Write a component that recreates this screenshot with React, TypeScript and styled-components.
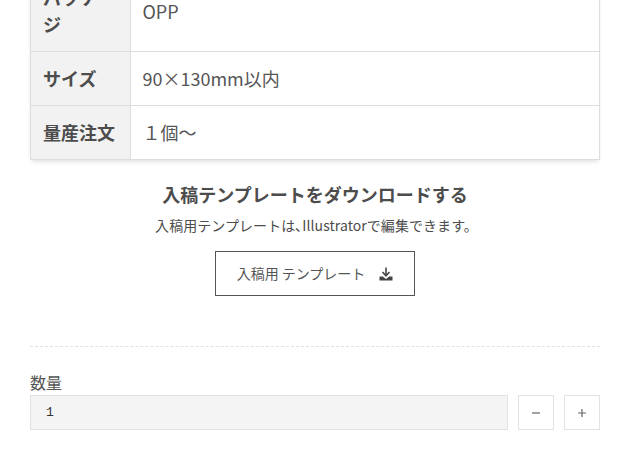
import React from 'react';
import styled, { createGlobalStyle } from 'styled-components';

const GlobalStyle = createGlobalStyle`
  html, body {
    margin: 0;
    padding: 0;
    height: 100%;
    overflow: hidden;
    background: #fff;
  }
  body {
    font-family: "Noto Sans CJK JP", "Noto Sans", sans-serif;
    color: #4c4c4c;
  }
`;

const specs = [
  { label: 'パッケージ', value: 'OPP' },
  { label: 'サイズ', value: '90×130mm以内' },
  { label: '量産注文', value: '１個～' },
];

const App: React.FC = () => (
  <>
    <GlobalStyle />
    <Page>
      <SpecTable>
        <tbody>
          {specs.map((spec) => (
            <tr key={spec.label}>
              <SpecLabel>{spec.label}</SpecLabel>
              <SpecValue>{spec.value}</SpecValue>
            </tr>
          ))}
        </tbody>
      </SpecTable>

      <Download>
        <DownloadTitle>入稿テンプレートをダウンロードする</DownloadTitle>
        <DownloadNote>入稿用テンプレートは､Illustratorで編集できます。</DownloadNote>
        <DownloadBtn>
          <BtnLabel>入稿用 テンプレート</BtnLabel>
          <svg width="14" height="14" viewBox="0 0 14 14" fill="none">
            <path d="M7 0.500v7.500" stroke="#444" strokeWidth="1.600" />
            <path d="M3.500 5L7 8.800L10.500 5" stroke="#444" strokeWidth="1.600" />
            <path d="M0.500 9.500h3.300L7 12l3.200-2.500h3.300v4h-13z" fill="#444" />
          </svg>
        </DownloadBtn>
      </Download>

      <Divider />

      <QtyLabel>数量</QtyLabel>
      <QtyRow>
        <QtyInput>1</QtyInput>
        <QtyBtn aria-label="decrease">
          <svg width="10" height="10" viewBox="0 0 10 10">
            <path d="M1 5h8" stroke="#666" strokeWidth="1.200" />
          </svg>
        </QtyBtn>
        <QtyBtn aria-label="increase">
          <svg width="10" height="10" viewBox="0 0 10 10">
            <path d="M1 5h8M5 1v8" stroke="#666" strokeWidth="1.200" />
          </svg>
        </QtyBtn>
      </QtyRow>
    </Page>
  </>
);

export default App;

const Page = styled.div`
  width: 570px;
  margin: -30px 0 0 30px;
`;

const SpecTable = styled.table`
  width: 100%;
  border-collapse: collapse;
  table-layout: fixed;
  font-size: 18px;
  line-height: 27px;
  box-shadow: 0 3px 5px -2px rgba(0, 0, 0, 0.16);
`;

const SpecLabel = styled.th`
  width: 100px;
  padding: 13px 12px;
  box-sizing: border-box;
  border: 1px solid #ddd;
  background: #f2f2f2;
  color: #4c4c4c;
  font-weight: 700;
  text-align: left;
`;

const SpecValue = styled.td`
  padding: 13px 11.5px;
  border: 1px solid #ddd;
  color: #555;
`;

const Download = styled.div`
  display: flex;
  flex-direction: column;
  align-items: center;
  padding-top: 21px;
`;

const DownloadTitle = styled.div`
  font-size: 18px;
  line-height: 27px;
  font-weight: 700;
  color: #4c4c4c;
`;

const DownloadNote = styled.div`
  margin-top: 7px;
  padding-left: 3px;
  font-size: 14px;
  line-height: 21px;
  letter-spacing: 0.06px;
  color: #4c4c4c;
`;

const DownloadBtn = styled.div`
  margin-top: 15px;
  width: 200px;
  height: 45px;
  box-sizing: border-box;
  border: 1px solid #555;
  display: flex;
  align-items: center;
  justify-content: center;
  gap: 14px;
  font-size: 14px;
  color: #555;
`;

const BtnLabel = styled.span`
  padding-bottom: 2px;
`;

const Divider = styled.div`
  margin-top: 50px;
  border-top: 1px dashed #e2e2e2;
`;

const QtyLabel = styled.div`
  margin-top: 23px;
  margin-bottom: 1px;
  font-size: 16px;
  line-height: 24px;
  color: #555;
`;

const QtyRow = styled.div`
  display: flex;
  gap: 10px;
`;

const QtyInput = styled.div`
  flex: 1;
  height: 35px;
  box-sizing: border-box;
  padding-left: 15px;
  border: 1px solid #e2e2e2;
  background: #f4f4f4;
  display: flex;
  align-items: center;
  font-family: "Liberation Mono", monospace;
  font-size: 13px;
  color: #333;
`;

const QtyBtn = styled.div`
  width: 36px;
  height: 35px;
  box-sizing: border-box;
  border: 1px solid #e2e2e2;
  display: flex;
  align-items: center;
  justify-content: center;
`;
